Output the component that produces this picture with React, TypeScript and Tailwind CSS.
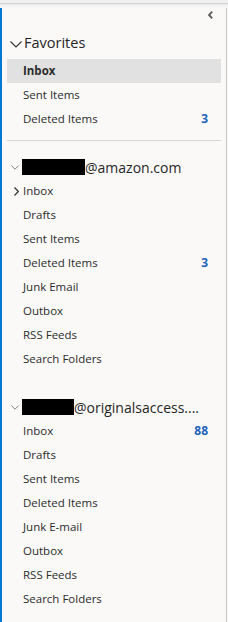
import React from 'react';

type Folder = { name: string; count?: number; bold?: boolean; selected?: boolean; expander?: boolean };

const favorites: Folder[] = [
  { name: 'Inbox', bold: true, selected: true },
  { name: 'Sent Items' },
  { name: 'Deleted Items', count: 3 },
];

const amazon: Folder[] = [
  { name: 'Inbox', expander: true },
  { name: 'Drafts' },
  { name: 'Sent Items' },
  { name: 'Deleted Items', count: 3 },
  { name: 'Junk Email' },
  { name: 'Outbox' },
  { name: 'RSS Feeds' },
  { name: 'Search Folders' },
];

const original: Folder[] = [
  { name: 'Inbox', count: 88 },
  { name: 'Drafts' },
  { name: 'Sent Items' },
  { name: 'Deleted Items' },
  { name: 'Junk E-mail' },
  { name: 'Outbox' },
  { name: 'RSS Feeds' },
  { name: 'Search Folders' },
];

function ChevronDown({ className = '' }: { className?: string }) {
  return (
    <svg viewBox="0 0 12 7" className={className} fill="none" stroke="currentColor" strokeWidth="1.1">
      <path d="M0.5 0.5 L6 6 L11.5 0.5" />
    </svg>
  );
}

function FolderRow({ f }: { f: Folder }) {
  return (
    <div
      className={`relative flex items-center h-6 pl-4 pr-[13px] ${f.selected ? 'bg-[#e1e1e1]' : ''}`}
    >
      {f.expander && (
        <svg viewBox="0 0 5 9" className="absolute left-[7px] top-[8px] w-[5px] h-[9px] text-[#333]" fill="none" stroke="currentColor" strokeWidth="1.2">
          <path d="M0.5 0.5 L4.3 4.5 L0.5 8.5" />
        </svg>
      )}
      <span className={`flex-1 text-[11.5px] text-[#2b2b2b] ${f.bold ? 'font-bold' : ''}`}>{f.name}</span>
      {f.count !== undefined && <span className="text-[12px] font-bold text-[#1f64b8]">{f.count}</span>}
    </div>
  );
}

function AccountHeader({ redact, domain }: { redact: string; domain: string }) {
  return (
    <div className="flex items-center h-6 pl-[4px]">
      <ChevronDown className="w-[8px] h-[5px] text-[#555] mr-[3px] mt-[1px]" />
      <span className={`${redact} h-[16px] bg-black`} />
      <span className="text-[14px] text-[#262626] whitespace-nowrap">{domain}</span>
    </div>
  );
}

export default function App() {
  return (
    <div className="w-[228px] h-[622px] bg-[#faf9f8] overflow-hidden" style={{ fontFamily: '"Open Sans", "Noto Sans", sans-serif' }}>
      <div className="h-[4px] bg-[#efefef] border-b border-[#d2d2d2]" />
      <div className="h-[4px] bg-gradient-to-b from-[#ececec] to-[#faf9f8]" />
      <div className="w-[227px] h-[614px] border-l-2 border-[#0078d4] border-r border-r-[#c9c9c9] flex flex-col px-[5px]">
        <div className="flex justify-end h-[23px] pr-[8px] pt-[3px]">
          <svg viewBox="0 0 5 8" className="w-[5px] h-[8px] text-[#5a5a5a]" fill="none" stroke="currentColor" strokeWidth="1.8">
            <path d="M4.2 0.7 L1 4 L4.2 7.3" />
          </svg>
        </div>
        <div className="flex items-center h-6 pl-[3px]">
          <ChevronDown className="w-[12px] h-[7px] text-[#333] mr-[2px] mt-[2px]" />
          <span className="text-[14.5px] text-[#262626]">Favorites</span>
        </div>
        <div className="mt-[4px]">
          {favorites.map((f, i) => (
            <FolderRow key={i} f={f} />
          ))}
        </div>
        <div className="mt-[9px] h-px bg-[#d6d6d6]" />
        <div className="mt-[14px]">
          <AccountHeader redact="w-[63px]" domain="@amazon.com" />
          {amazon.map((f, i) => (
            <FolderRow key={i} f={f} />
          ))}
        </div>
        <div className="mt-[24px]">
          <AccountHeader redact="w-[52px]" domain="@originalsaccess...." />
          {original.map((f, i) => (
            <FolderRow key={i} f={f} />
          ))}
        </div>
      </div>
    </div>
  );
}
